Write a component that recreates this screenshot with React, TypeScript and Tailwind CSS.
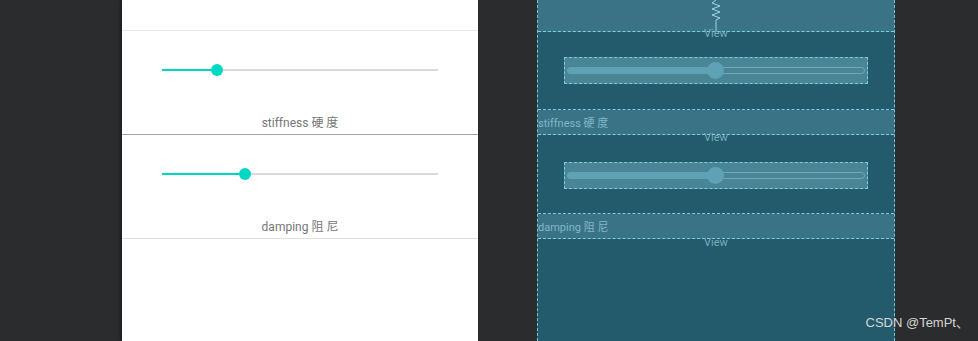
const font = "font-['Roboto','Noto_Sans_CJK_SC',sans-serif]";

function PhoneSlider({ percent }: { percent: number }) {
  return (
    <div className="relative h-[12px] w-[276px]">
      <div className="absolute left-0 right-0 top-[5px] h-[2px] bg-[#dadada]" />
      <div
        className="absolute left-0 top-[5px] h-[2px] bg-[#00d4c0]"
        style={{ width: `${percent}%` }}
      />
      <div
        className="absolute top-0 h-[12px] w-[12px] -translate-x-1/2 rounded-full bg-[#00d8c4]"
        style={{ left: `${percent}%` }}
      />
    </div>
  );
}

function PhoneSection({ label, percent, border }: { label: string; percent: number; border: string }) {
  return (
    <div className={`flex flex-col border-b ${border}`}>
      <div className="flex h-[77px] items-center justify-center">
        <PhoneSlider percent={percent} />
      </div>
      <div className="flex h-[26px] items-center justify-center pt-[4px] text-[12px] text-[#767676]">{label}</div>
    </div>
  );
}

function BlueSlider() {
  return (
    <div className="flex h-[27px] w-[304px] items-center border border-dashed border-[#79cde2] bg-[#4a8596] px-[2px]">
      <div className="relative flex h-[7px] w-full items-center">
        <div className="h-[7px] w-[149px] rounded-l-full bg-[#5fa2b6]" />
        <div className="h-[7px] flex-1 rounded-r-full border border-[#6aaabb]" />
        <div className="absolute left-[140px] top-[-5px] h-[17px] w-[17px] rounded-full bg-[#5fa2b6]" />
      </div>
    </div>
  );
}

function BlueSection({ label, tall }: { label: string; tall?: boolean }) {
  return (
    <div className="flex flex-col">
      <div
        className={`flex items-center justify-center border-b border-dashed border-[#7bd0e6] bg-[#235b6d] ${
          tall ? "h-[79px] pt-[2px]" : "h-[78px]"
        }`}
      >
        <BlueSlider />
      </div>
      <div className="flex h-[25px] items-center border-b border-dashed border-[#7bd0e6] bg-[#3a7385] pt-[4px] text-[11px] text-[#80b8c8]">
        {label}
      </div>
    </div>
  );
}

function ViewTag({ top }: { top: number }) {
  return (
    <div
      className="absolute left-[178px] -translate-x-1/2 text-[11px] leading-none text-[#78afc0]"
      style={{ top }}
    >
      View
    </div>
  );
}

export default function App() {
  return (
    <div className={`relative flex h-[341px] w-[978px] overflow-hidden bg-[#2b2c2e] ${font}`}>
      {/* phone preview */}
      <div className="ml-[122px] flex h-full w-[356px] flex-col bg-white shadow-[-2px_0_3px_rgba(0,0,0,0.35)]">
        <div className="h-[31px] border-b border-[#e8e8e8]" />
        <PhoneSection label="stiffness 硬 度" percent={20} border="border-[#a4a4a4]" />
        <PhoneSection label="damping 阻 尼" percent={30} border="border-[#e2e2e2]" />
      </div>

      {/* blueprint */}
      <div className="relative ml-[59px] flex h-full w-[358px] flex-col border-x border-dashed border-[#74c6dc] bg-[#235b6d]">
        <div className="relative h-[32px] border-b border-dashed border-[#7bd0e6] bg-[#3a7385]">
          <svg className="absolute left-[170px] top-0" width="16" height="31" viewBox="0 0 16 31">
            <polyline
              points="8,0 4,3 12,6 4,9 12,12 4,15 12,18 8,20 8,31"
              fill="none"
              stroke="#9fd6e4"
              strokeWidth="1"
            />
          </svg>
        </div>
        <BlueSection label="stiffness 硬 度" />
        <BlueSection label="damping 阻 尼" tall />
        <div className="flex-1" />
        <ViewTag top={28} />
        <ViewTag top={132} />
        <ViewTag top={237} />
      </div>

      <div className="absolute right-[9px] bottom-[9px] font-['Liberation_Sans','Noto_Sans_CJK_SC',sans-serif] text-[13px] text-[#d6d6d6]">
        CSDN @TemPt、
      </div>
    </div>
  );
}
